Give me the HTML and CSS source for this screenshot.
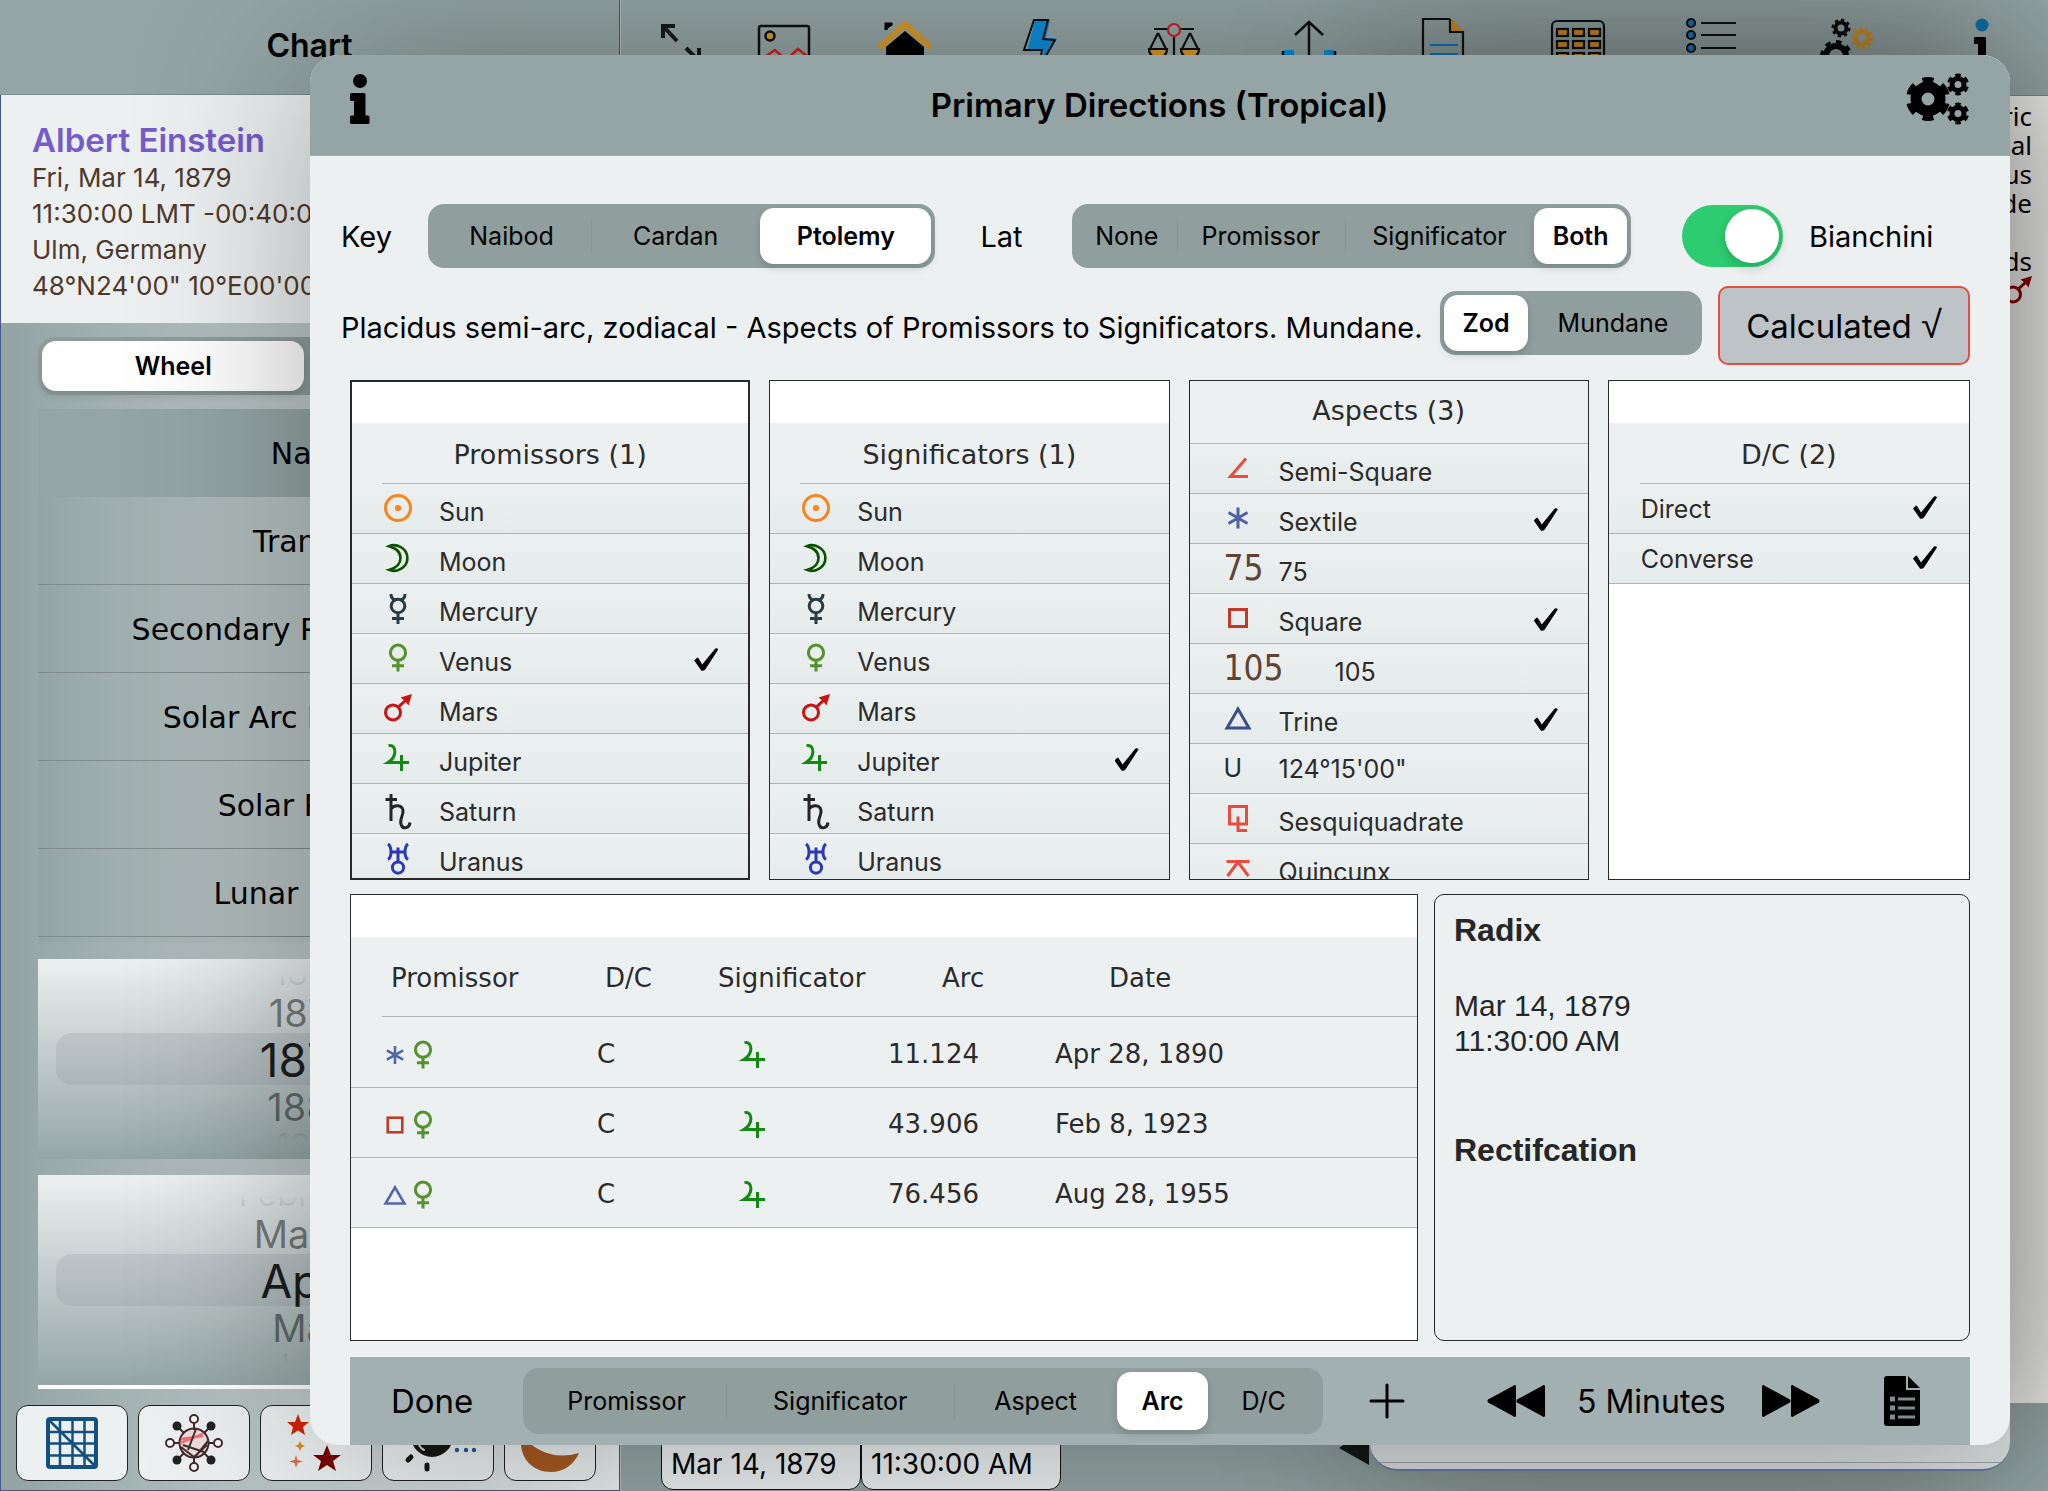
FILE: index.html
```html
<!DOCTYPE html>
<html lang="en">
<head>
    <meta charset="UTF-8">
    <meta name="viewport" content="width=device-width, initial-scale=1.0">
    <title>Primary Directions</title>
    <link rel="stylesheet" href="styles.css">
</head>
<body>
    <!-- Glyphs shared by the lists and the results table -->
    <svg class="symbols" aria-hidden="true">
        <symbol id="sun" viewBox="0 0 28 28"><circle cx="14" cy="14" r="12.5"/><circle cx="14" cy="14" r="1.6"/></symbol>
        <symbol id="moon" viewBox="0 0 28 28"><path d="M5 2.2C12-1 23.4 4 23.4 14S12 29 5 25.9C12 24 16.5 20 16.5 14S12 4 5 2.2Z" stroke-width="2.6"/></symbol>
        <symbol id="mercury" viewBox="0 0 28 28"><circle cx="14" cy="12" r="6.8"/><path d="M7 0C7 3.500 9 5.500 11.500 6M21 0C21 3.500 19 5.500 16.500 6M14 19V30M8 24.500H20"/></symbol>
        <symbol id="venus" viewBox="0 0 28 28"><circle cx="14" cy="8.7" r="7.6"/><path d="M14 16.500V27.500M8 21.700H20"/></symbol>
        <symbol id="mars" viewBox="0 0 28 28"><circle cx="9" cy="18.4" r="7.5"/><path d="M14.500 12.800L22 6"/><path d="M28 0L16.500 3.500L21 7L24.500 11.500Z" fill="currentColor" stroke="none"/></symbol>
        <symbol id="jupiter" viewBox="0 0 28 28"><path d="M4.500 1.600C9 .6 11.200 4 10.800 8.500C10.300 13.500 7.500 16.500 4 18.600H25M17.500 11V27"/></symbol>
        <symbol id="saturn" viewBox="0 0 28 28"><path d="M7 0V27M1.500 5.500H13M7 15C10 10.500 18 10.500 19 16.500C19.800 21.500 14.500 25.500 17.500 31.500C19.500 35.500 25.500 34 26 28.500"/></symbol>
        <symbol id="uranus" viewBox="0 0 28 28"><circle cx="14" cy="23.6" r="5.6"/><path d="M14 3.500V18M6 8H22M4 0C8 3 8 13 4 15.500M24 0C20 3 20 13 24 15.500"/></symbol>
        <symbol id="semisquare" viewBox="0 0 28 28"><path d="M22 4.500L6.500 22.400H24"/></symbol>
        <symbol id="sextile" viewBox="0 0 28 28"><path d="M14 3.500V24.500M4.500 8.500L23.500 19.500M23.500 8.500L4.500 19.500"/></symbol>
        <symbol id="square" viewBox="0 0 28 28"><rect x="5.500" y="5.500" width="17" height="17"/></symbol>
        <symbol id="trine" viewBox="0 0 28 28"><path d="M14 5L25 24H3Z"/></symbol>
        <symbol id="sesqui" viewBox="0 0 28 28"><path d="M5.500 2.500H22.500V20H5.500ZM14 12.500V26.500H23"/></symbol>
        <symbol id="quincunx" viewBox="0 0 28 28"><path d="M2.500 7.500H25.500M3.500 22L14 8L24.500 22"/></symbol>
    </svg>

    <div class="app">
        <aside class="sidebar">
            <header class="sidebar-header">Chart</header>
            <section class="person">
                <h2>Albert Einstein</h2>
                <p>Fri, Mar 14, 1879</p>
                <p>11:30:00 LMT -00:40:00</p>
                <p>Ulm, Germany</p>
                <p>48°N24'00" 10°E00'00"</p>
            </section>
            <div class="sidebar-body">
                <div class="segmented view-switch">
                    <label><input type="radio" name="view" checked><span>Wheel</span></label>
                    <label><input type="radio" name="view"><span>Table</span></label>
                </div>
                <ul class="methods">
                    <li class="active">Natal</li>
                    <li>Transits</li>
                    <li>Secondary Progressions</li>
                    <li>Solar Arc Directions</li>
                    <li>Solar Return</li>
                    <li>Lunar Return</li>
                </ul>
                <ul class="picker">
                    <li class="far above">1877</li>
                    <li class="near">1878</li>
                    <li class="current">1879</li>
                    <li class="near">1880</li>
                    <li class="far below">1881</li>
                </ul>
                <ul class="picker months">
                    <li class="far above">February</li>
                    <li class="near">March</li>
                    <li class="current">April</li>
                    <li class="near">May</li>
                    <li class="far below">June</li>
                </ul>
                <div class="tools">
                    <button type="button" aria-label="Grid">
                        <svg width="52" height="52" viewBox="0 0 52 52" fill="none" stroke="#14507f" stroke-width="2.500"><rect x="2" y="2" width="48" height="48" rx="2" stroke-width="4"/><path d="M14 2V50M26.500 2V50M38.500 2V50M2 15H50M2 26.500H50M2 38.500H50M3 3L49 49"/></svg>
                    </button>
                    <button type="button" aria-label="Planets">
                        <svg width="58" height="58" viewBox="0 0 58 58" fill="none" stroke="#42292b" stroke-width="2"><circle cx="29" cy="29" r="14.500" fill="#e9dede"/><path d="M15 29L38 20M16 25L38 22" stroke="#f07070" stroke-width="2.500"/><path d="M29 9V16M29 42V49M9 29H15M43 29H49M14 14L19 19M44 14L39 19M14 44L19 39M44 44L39 39M31 15L23 36M16 33L29 43L42 31M18 31L39 38M30 43L43 27"/><g fill="#fff"><circle cx="29" cy="5" r="4"/><circle cx="29" cy="53" r="4"/><circle cx="5" cy="29" r="4"/><circle cx="53" cy="29" r="4"/></g><g fill="#222" stroke="none"><circle cx="12" cy="12" r="4.500"/><circle cx="46" cy="12" r="4.500"/><circle cx="12" cy="46" r="4.500"/><circle cx="46" cy="46" r="4.500"/></g></svg>
                    </button>
                    <button type="button" aria-label="Stars">
                        <svg width="58" height="58" viewBox="0 0 58 58"><path fill="#d62400" d="M11 0L14 8H22L16 13L18 21L11 16.500L4 21L6 13L0 8H8Z"/><path fill="#e08a2a" d="M13 27L14.500 30.500L18 32L14.500 33.500L13 37L11.500 33.500L8 32L11.500 30.500Z"/><path fill="#e0704a" d="M9 41L10.500 46L16 47.500L10.500 49L9 54L7.500 49L2 47.500L7.500 46Z"/><path fill="#7c0000" d="M40 31L44 41H54L46 47L49 57L40 51L31 57L34 47L26 41H36Z"/></svg>
                    </button>
                    <button type="button" aria-label="Eclipse">
                        <svg width="72" height="58" viewBox="0 0 72 58" stroke="#151713" stroke-width="5" stroke-linecap="round"><path d="M6 46L9 43M25 51V55M2 24H7"/><circle cx="30" cy="22" r="18.500" fill="#151713"/><path d="M15 22C15 29 18 34 22 36" stroke="#d0d3d2" stroke-width="2" fill="none"/><g fill="#1d5d9b" stroke="none"><circle cx="55" cy="36" r="2.200"/><circle cx="64" cy="36" r="2.200"/><circle cx="72" cy="36" r="2.200"/></g></svg>
                    </button>
                    <button type="button" class="narrow" aria-label="Moon">
                        <svg width="58" height="58" viewBox="0 0 58 58"><path fill="#a85a22" d="M0 20C14 38 34 46 58 39C53 51 42 58 30 58C12 58 0 45 0 29Z"/></svg>
                    </button>
                </div>
            </div>
        </aside>

        <main class="main">
            <nav class="toolbar">
                <div class="toolbar-start">
                    <svg class="arrows" width="40" height="50" viewBox="0 0 40 50" fill="none" stroke="#151a19" stroke-width="4"><path d="M2 14V2H14M3 3L16 17M25 24L38 37M38 24V38H26"/></svg>
                    <svg width="54" height="50" viewBox="0 0 54 50" fill="none" stroke="#0d1111" stroke-width="2.500"><rect x="2" y="8" width="50" height="42" rx="2"/><circle cx="13" cy="18" r="4.500" fill="#d89a2a"/><path d="M3 42L18 32L29 42L41 31L51 39" stroke="#cf2027"/></svg>
                </div>
                <div class="toolbar-end">
                    <svg width="54" height="50" viewBox="0 0 54 50"><path d="M8 12V6H13V8" stroke="#000" stroke-width="3"/><path d="M8 29L27 13L46 29V50H8Z"/><path d="M3 28L27 6L51 28" fill="none" stroke="#d89a2a" stroke-width="6" stroke-linecap="round"/></svg>
                    <svg width="54" height="50" viewBox="0 0 54 50"><path d="M22 2H37L33 20H43L26 48L31 33H14Z" fill="#0d8fdb"/><path d="M21 2H35L30 21L42 22L26 50L29 32H11Z" fill="none" stroke="#0d1111" stroke-width="2"/></svg>
                    <svg width="54" height="50" viewBox="0 0 54 50" fill="none" stroke="#0d1111" stroke-width="2.200"><path d="M2 31H20C20 43 2 43 2 31ZM34 31H52C52 43 34 43 34 31Z" fill="#d89a2a"/><path d="M7 11H21M33 11H47M27 18V50M11 15L3 31M11 15L19 31M43 15L35 31M43 15L51 31"/><circle cx="27" cy="12" r="6" stroke="#cf2027"/></svg>
                    <svg width="54" height="50" viewBox="0 0 54 50" fill="none" stroke="#0d1111" stroke-width="2.500"><path d="M27 4V50M13 17L27 4L41 17"/><path d="M12 35H5V50M42 35H49V50" stroke="#0d8fdb" stroke-width="6"/><path d="M1 33V50M53 33V50"/></svg>
                    <svg width="54" height="50" viewBox="0 0 54 50" fill="none" stroke="#0d1111" stroke-width="2.200"><path d="M36 1L47 13H36Z" fill="#d08f24" stroke="none"/><path d="M34 1H7V50M34 1V14H47V50"/><path d="M14 27H42M14 36H42" stroke="#0d7fc4"/></svg>
                    <svg width="54" height="50" viewBox="0 0 54 50" fill="none" stroke="#0d1111" stroke-width="2.200"><rect x="1" y="3" width="52" height="50" rx="5"/><g fill="#d08f24"><rect x="6" y="11" width="11" height="7"/><rect x="22" y="11" width="11" height="7"/><rect x="38" y="11" width="11" height="7"/><rect x="6" y="23" width="11" height="7"/><rect x="22" y="23" width="11" height="7"/><rect x="38" y="23" width="11" height="7"/><rect x="6" y="35" width="11" height="7"/><rect x="22" y="35" width="11" height="7"/><rect x="38" y="35" width="11" height="7"/></g></svg>
                    <svg width="54" height="50" viewBox="0 0 54 50" fill="none" stroke="#0d1111" stroke-width="2.200"><path d="M16 5H51M16 17H51M16 30H51"/><g fill="#0d7fc4"><circle cx="6" cy="5" r="4"/><circle cx="6" cy="17" r="4"/><circle cx="6" cy="30" r="4"/></g></svg>
                    <svg width="54" height="50" viewBox="0 0 54 50" fill="none"><g stroke="#080b0a"><circle cx="21" cy="10" r="5.500" stroke-width="4"/><circle cx="21" cy="10" r="8" stroke-width="3" pathLength="16" stroke-dasharray="1"/><circle cx="16" cy="38" r="10" stroke-width="6"/><circle cx="16" cy="38" r="14" stroke-width="4" pathLength="16" stroke-dasharray="1"/></g><g stroke="#d08f24"><circle cx="42" cy="20" r="6.500" stroke-width="4"/><circle cx="42" cy="20" r="9.500" stroke-width="3" pathLength="20" stroke-dasharray="1"/></g></svg>
                    <svg width="54" height="50" viewBox="0 0 54 50"><circle cx="28" cy="7" r="6.500" fill="#0d72a8"/><path d="M20 19H32V50H24V26H20Z"/></svg>
                </div>
            </nav>
            <section class="chart">
                <p>Geocentric</p>
                <p>Tropical</p>
                <p>Placidus</p>
                <p>Mean Node</p>
                <p class="spaced">Bounds</p>
                <svg class="glyph red-dark" width="28" height="28"><use href="#mars"/></svg>
            </section>
            <footer class="time-bar">
                <input type="text" value="Mar 14, 1879" aria-label="Date">
                <input type="text" value="11:30:00 AM" aria-label="Time">
                <svg class="back" width="30" height="50" viewBox="0 0 30 50"><path d="M0 23L30 2V40Z" fill="#131a18"/></svg>
            </footer>
        </main>
    </div>

    <div class="sheet-under"></div>

    <div class="sheet" role="dialog" aria-labelledby="sheet-title">
        <header class="sheet-header">
            <button type="button" class="icon-button" aria-label="Info">
                <svg width="20" height="50" viewBox="0 0 20 50"><circle cx="10" cy="7" r="7"/><path d="M1.500 19H14Q15.500 19 15.500 20.500V41.500H18Q19.500 41.500 19.500 43V48.500Q19.500 50 18 50H1.500Q0 50 0 48.500V43Q0 41.500 1.500 41.500H4V27H1.500Q0 27 0 25.500V20.500Q0 19 1.500 19Z"/></svg>
            </button>
            <h1 id="sheet-title">Primary Directions (Tropical)</h1>
            <button type="button" class="icon-button settings" aria-label="Settings">
                <svg width="62" height="50" viewBox="0 0 62 50" fill="none" stroke="#000"><circle cx="21" cy="25" r="12" stroke-width="11"/><circle cx="21" cy="25" r="19" stroke-width="6" pathLength="120" stroke-dasharray="11 9" stroke-dashoffset="-4.500"/><circle cx="51" cy="10.500" r="6" stroke-width="5"/><circle cx="51" cy="10.500" r="9.500" stroke-width="3" pathLength="120" stroke-dasharray="11 9" stroke-dashoffset="-4.500"/><circle cx="51" cy="39.500" r="6" stroke-width="5"/><circle cx="51" cy="39.500" r="9.500" stroke-width="3" pathLength="120" stroke-dasharray="11 9" stroke-dashoffset="-4.500"/></svg>
            </button>
        </header>

        <div class="options">
            <span class="option-label key">Key</span>
            <div class="segmented key-switch">
                <label><input type="radio" name="key"><span>Naibod</span></label>
                <label class="divided"><input type="radio" name="key"><span>Cardan</span></label>
                <label><input type="radio" name="key" checked><span>Ptolemy</span></label>
            </div>
            <span class="option-label lat">Lat</span>
            <div class="segmented lat-switch">
                <label><input type="radio" name="lat"><span>None</span></label>
                <label class="divided"><input type="radio" name="lat"><span>Promissor</span></label>
                <label class="divided"><input type="radio" name="lat"><span>Significator</span></label>
                <label><input type="radio" name="lat" checked><span>Both</span></label>
            </div>
            <input type="checkbox" class="toggle" id="bianchini" checked>
            <label class="option-label bianchini" for="bianchini">Bianchini</label>
        </div>

        <div class="summary">
            <p>Placidus semi-arc, zodiacal - Aspects of Promissors to Significators. Mundane.</p>
            <div class="segmented zod-switch">
                <label><input type="radio" name="plane" checked><span>Zod</span></label>
                <label><input type="radio" name="plane"><span>Mundane</span></label>
            </div>
            <button type="button" class="calculate">Calculated <span class="root">√</span></button>
        </div>

        <div class="lists">
            <section class="list focused">
                <h3>Promissors (1)</h3>
                <label class="row"><svg class="glyph orange"><use href="#sun"/></svg><span>Sun</span><input type="checkbox"></label>
                <label class="row"><svg class="glyph green-dark"><use href="#moon"/></svg><span>Moon</span><input type="checkbox"></label>
                <label class="row"><svg class="glyph slate"><use href="#mercury"/></svg><span>Mercury</span><input type="checkbox"></label>
                <label class="row"><svg class="glyph olive"><use href="#venus"/></svg><span>Venus</span><input type="checkbox" checked></label>
                <label class="row"><svg class="glyph red"><use href="#mars"/></svg><span>Mars</span><input type="checkbox"></label>
                <label class="row"><svg class="glyph green"><use href="#jupiter"/></svg><span>Jupiter</span><input type="checkbox"></label>
                <label class="row"><svg class="glyph black"><use href="#saturn"/></svg><span>Saturn</span><input type="checkbox"></label>
                <label class="row"><svg class="glyph blue"><use href="#uranus"/></svg><span>Uranus</span><input type="checkbox"></label>
            </section>

            <section class="list">
                <h3>Significators (1)</h3>
                <label class="row"><svg class="glyph orange"><use href="#sun"/></svg><span>Sun</span><input type="checkbox"></label>
                <label class="row"><svg class="glyph green-dark"><use href="#moon"/></svg><span>Moon</span><input type="checkbox"></label>
                <label class="row"><svg class="glyph slate"><use href="#mercury"/></svg><span>Mercury</span><input type="checkbox"></label>
                <label class="row"><svg class="glyph olive"><use href="#venus"/></svg><span>Venus</span><input type="checkbox"></label>
                <label class="row"><svg class="glyph red"><use href="#mars"/></svg><span>Mars</span><input type="checkbox"></label>
                <label class="row"><svg class="glyph green"><use href="#jupiter"/></svg><span>Jupiter</span><input type="checkbox" checked></label>
                <label class="row"><svg class="glyph black"><use href="#saturn"/></svg><span>Saturn</span><input type="checkbox"></label>
                <label class="row"><svg class="glyph blue"><use href="#uranus"/></svg><span>Uranus</span><input type="checkbox"></label>
            </section>

            <section class="list aspects">
                <h3>Aspects (3)</h3>
                <label class="row"><svg class="glyph coral"><use href="#semisquare"/></svg><span>Semi-Square</span><input type="checkbox"></label>
                <label class="row"><svg class="glyph indigo"><use href="#sextile"/></svg><span>Sextile</span><input type="checkbox" checked></label>
                <label class="row"><b class="degree">75</b><span>75</span><input type="checkbox"></label>
                <label class="row"><svg class="glyph brick"><use href="#square"/></svg><span>Square</span><input type="checkbox" checked></label>
                <label class="row"><b class="degree wide">105</b><span>105</span><input type="checkbox"></label>
                <label class="row"><svg class="glyph navy"><use href="#trine"/></svg><span>Trine</span><input type="checkbox" checked></label>
                <label class="row plain"><b class="letter">U</b><span>124°15'00"</span><input type="checkbox"></label>
                <label class="row"><svg class="glyph coral"><use href="#sesqui"/></svg><span>Sesquiquadrate</span><input type="checkbox"></label>
                <label class="row"><svg class="glyph coral"><use href="#quincunx"/></svg><span>Quincunx</span><input type="checkbox"></label>
            </section>

            <section class="list directions">
                <h3>D/C (2)</h3>
                <label class="row plain"><span>Direct</span><input type="checkbox" checked></label>
                <label class="row plain"><span>Converse</span><input type="checkbox" checked></label>
            </section>
        </div>

        <div class="results">
            <div class="table-box">
                <table>
                    <colgroup><col class="c-promissor"><col class="c-dc"><col class="c-significator"><col class="c-arc"><col></colgroup>
                    <thead>
                        <tr><th>Promissor</th><th>D/C</th><th>Significator</th><th>Arc</th><th>Date</th></tr>
                    </thead>
                    <tbody>
                        <tr>
                            <td><svg class="glyph small periwinkle"><use href="#sextile"/></svg><svg class="glyph olive"><use href="#venus"/></svg></td>
                            <td>C</td>
                            <td><svg class="glyph green"><use href="#jupiter"/></svg></td>
                            <td>11.124</td>
                            <td>Apr 28, 1890</td>
                        </tr>
                        <tr>
                            <td><svg class="glyph small brick"><use href="#square"/></svg><svg class="glyph olive"><use href="#venus"/></svg></td>
                            <td>C</td>
                            <td><svg class="glyph green"><use href="#jupiter"/></svg></td>
                            <td>43.906</td>
                            <td>Feb 8, 1923</td>
                        </tr>
                        <tr>
                            <td><svg class="glyph small periwinkle"><use href="#trine"/></svg><svg class="glyph olive"><use href="#venus"/></svg></td>
                            <td>C</td>
                            <td><svg class="glyph green"><use href="#jupiter"/></svg></td>
                            <td>76.456</td>
                            <td>Aug 28, 1955</td>
                        </tr>
                    </tbody>
                </table>
            </div>
            <section class="radix">
                <h3>Radix</h3>
                <p>Mar 14, 1879<br>11:30:00 AM</p>
                <h3>Rectifcation</h3>
            </section>
        </div>

        <footer class="sheet-footer">
            <button type="button" class="done">Done</button>
            <div class="segmented sort-switch">
                <label><input type="radio" name="sort"><span>Promissor</span></label>
                <label class="divided"><input type="radio" name="sort"><span>Significator</span></label>
                <label class="divided"><input type="radio" name="sort"><span>Aspect</span></label>
                <label><input type="radio" name="sort" checked><span>Arc</span></label>
                <label><input type="radio" name="sort"><span>D/C</span></label>
            </div>
            <button type="button" class="icon-button plus" aria-label="Add">
                <svg width="36" height="36" viewBox="0 0 36 36" stroke="#000" stroke-width="3" stroke-linecap="round"><path d="M18 2V34M2 18H34"/></svg>
            </button>
            <button type="button" class="icon-button rewind" aria-label="Back">
                <svg width="58" height="34" viewBox="0 0 58 34"><path d="M29 2V32Q28 34 26 32L1 18.500Q0 17 1 15.500L26 2Q28 0 29 2ZM58 2V32Q57 34 55 32L30 18.500Q29 17 30 15.500L55 2Q57 0 58 2Z"/></svg>
            </button>
            <span class="step">5 Minutes</span>
            <button type="button" class="icon-button forward" aria-label="Forward">
                <svg width="58" height="34" viewBox="0 0 58 34"><path d="M0 2V32Q1 34 3 32L28 18.500Q29 17 28 15.500L3 2Q1 0 0 2ZM29 2V32Q30 34 32 32L57 18.500Q58 17 57 15.500L32 2Q30 0 29 2Z"/></svg>
            </button>
            <button type="button" class="icon-button" aria-label="Report">
                <svg width="36" height="50" viewBox="0 0 36 50"><path d="M3 0H22V14H36V47Q36 50 33 50H3Q0 50 0 47V3Q0 0 3 0ZM24 0L36 12H24Z"/><path d="M14 23H31M14 32H31M14 41H31" stroke="#7f8b8b" stroke-width="3"/><path d="M6 23H11M6 32H11M6 41H11" stroke="#7f8b8b" stroke-width="5"/></svg>
            </button>
        </footer>
    </div>
</body>
</html>
```
FILE: styles.css
```css
* {
    box-sizing: border-box;
}
body {
    margin: 0;
    height: 100vh;
    overflow: hidden;
    position: relative;
    background-color: #95a5a5;
    color: #000;
    font-family: Inter, "Liberation Sans", sans-serif;
    font-size: 26px;
}
h1, h2, h3, p, ul {
    margin: 0;
    padding: 0;
}
ul {
    list-style: none;
}
button, input {
    font: inherit;
    color: inherit;
}
button {
    padding: 0;
    border: 0;
    background: none;
    cursor: pointer;
}
svg {
    display: block;
    overflow: visible;
    flex: none;
}
.symbols {
    position: absolute;
    width: 0;
    height: 0;
}
.app {
    display: grid;
    grid-template-columns: 620px 1fr;
    height: 100%;
}

/* Sidebar */
.sidebar {
    display: flex;
    flex-direction: column;
    min-height: 0;
    border-right: 1px solid #46568f;
    border-bottom: 1px solid #46568f;
}
.sidebar-header {
    height: 96px;
    padding-top: 26px;
    background-color: #95a5a5;
    border-bottom: 1px solid #7d8a89;
    text-align: center;
    font-size: 32px;
    font-weight: 600;
    line-height: 40px;
}
.person {
    height: 228px;
    padding: 25px 31px;
    background-color: #ecf0f1;
    border-left: 1px solid #46568f;
    color: #4f392b;
    line-height: 36px;
    white-space: nowrap;
}
.person h2 {
    color: #765bcb;
    font-size: 33px;
    font-weight: 600;
    line-height: 40px;
}
.sidebar-body {
    flex: 1;
    display: flex;
    flex-direction: column;
    padding: 14px 14px 9px 15px;
    background: linear-gradient(to right, #93a3a3, #ecf0f1);
    border-left: 1px solid #46568f;
}
.view-switch {
    height: 58px;
    margin: 0 22px;
    grid-template-columns: 262fr 274fr;
}
.methods {
    margin: 14px 22px 16px;
    padding-bottom: 6px;
    background: linear-gradient(to right, #95a5a5, #dfe4e5);
    font-family: "DejaVu Sans", sans-serif;
    font-size: 30px;
    text-align: center;
}
.methods li {
    height: 88px;
    border-bottom: 1px solid #828c8c;
    line-height: 90px;
}
.methods .active {
    background-color: #95a5a5;
    border-bottom-color: transparent;
}
.picker {
    height: 200px;
    margin: 0 22px 16px;
    display: flex;
    flex-direction: column;
    justify-content: center;
    background: linear-gradient(to bottom, #ecf0f1, #95a5a5);
    text-align: center;
}
.months {
    height: 214px;
    border-bottom: 4px solid #fff;
}
.picker .current {
    height: 52px;
    margin: 0 18px;
    border-radius: 16px;
    background-color: rgba(140, 145, 155, 0.22);
    color: #1c1f1f;
    font-size: 46px;
    line-height: 54px;
}
.picker .near {
    height: 42px;
    color: rgba(0, 0, 0, 0.45);
    font-size: 38px;
    line-height: 44px;
}
.picker .far {
    height: 24px;
    overflow: hidden;
    color: rgba(0, 0, 0, 0.15);
    font-size: 34px;
}
.picker .above {
    line-height: 12px;
    -webkit-mask-image: linear-gradient(transparent 30%, #000);
    mask-image: linear-gradient(transparent 30%, #000);
}
.picker .below {
    line-height: 38px;
    -webkit-mask-image: linear-gradient(#000, transparent 60%);
    mask-image: linear-gradient(#000, transparent 60%);
}
.tools {
    display: flex;
    gap: 10px;
}
.tools button {
    width: 112px;
    height: 76px;
    display: flex;
    align-items: center;
    justify-content: center;
    border: 1px solid #1e2222;
    border-radius: 12px;
    background-color: #ecf0f1;
}
.tools .narrow {
    width: 92px;
}

/* Main area */
.main {
    display: flex;
    flex-direction: column;
    min-width: 0;
    border-left: 1px solid #b9c1c0;
}
.toolbar {
    height: 96px;
    padding: 18px 40px 0;
    display: flex;
    gap: 67px;
    border-bottom: 1px solid #7d8a89;
}
.toolbar-start {
    display: flex;
    gap: 56px;
}
.arrows {
    margin-top: 6px;
}
.toolbar-end {
    flex: 1;
    display: flex;
    justify-content: space-between;
}
.chart {
    flex: 1;
    padding: 6px 16px;
    background-color: #eeeeec;
    font-family: "Noto Sans", sans-serif;
    line-height: 29px;
    text-align: right;
}
.chart .spaced {
    margin-top: 29px;
}
.chart .glyph {
    margin-left: auto;
}
.time-bar {
    height: 88px;
    padding: 22px 0 1px 40px;
    display: flex;
}
.time-bar input {
    width: 200px;
    padding: 12px 0 0 9px;
    border: 1px solid #111;
    border-radius: 12px;
    background-color: #ecf0f1;
    font-size: 28px;
}
.time-bar .back {
    margin-left: 278px;
}

/* Segmented controls */
.segmented {
    display: grid;
    padding: 4px;
    border-radius: 16px;
    background-color: #909e9e;
    font-size: 25px;
}
.segmented label {
    position: relative;
    display: flex;
    cursor: pointer;
}
.segmented input {
    position: absolute;
    opacity: 0;
}
.segmented span {
    flex: 1;
    display: flex;
    align-items: center;
    justify-content: center;
    border-radius: 14px;
}
.segmented input:checked + span {
    background-color: #fff;
    box-shadow: 0 4px 8px rgba(0, 0, 0, 0.15);
    font-weight: 600;
}
.segmented .divided {
    background: linear-gradient(#879595, #879595) no-repeat left center / 1px 36px;
}

/* Popovers */
.sheet-under {
    position: absolute;
    top: 55px;
    right: 38px;
    bottom: 20px;
    width: 640px;
    border-bottom: 2px solid #66769c;
    border-radius: 28px;
    background: linear-gradient(#9aa4a4, #9aa4a4) no-repeat left bottom 6px / 100% 1px #d7dbdc;
    box-shadow: 0 0 160px rgba(0, 0, 0, 0.3);
}
.sheet {
    position: absolute;
    top: 55px;
    right: 38px;
    bottom: 46px;
    left: 310px;
    display: flex;
    flex-direction: column;
    overflow: hidden;
    border-radius: 28px;
    background-color: #ecf0f1;
    box-shadow: 0 0 180px rgba(0, 0, 0, 0.32);
}
.sheet-header {
    height: 101px;
    padding: 0 41px 12px 40px;
    display: grid;
    grid-template-columns: 1fr auto 1fr;
    align-items: center;
    background-color: #95a5a5;
    border-bottom: 1px solid #a4afb0;
}
.sheet-header h1 {
    padding-top: 12px;
    font-size: 33px;
    font-weight: 600;
}
.sheet-header .icon-button {
    justify-self: start;
}
.sheet-header .settings {
    justify-self: end;
}
.options {
    margin: 48px 40px 18px 31px;
    display: flex;
    align-items: center;
}
.option-label {
    font-size: 29px;
}
.options .segmented {
    height: 64px;
}
.key {
    width: 87px;
}
.key-switch {
    flex: 507 1 0;
    grid-template-columns: 159fr 169fr 171fr;
}
.lat {
    width: 137px;
    padding-left: 45px;
}
.lat-switch {
    flex: 559 1 0;
    grid-template-columns: 101fr 168fr 190fr 93fr;
}
.toggle {
    appearance: none;
    width: 101px;
    height: 62px;
    margin: 0 26px 0 51px;
    padding: 4px;
    border-radius: 31px;
    background-color: #2ecc71;
}
.toggle::before {
    content: "";
    display: block;
    width: 54px;
    height: 54px;
    margin-left: auto;
    border-radius: 50%;
    background-color: #fff;
    box-shadow: 0 4px 12px rgba(0, 0, 0, 0.2);
}
.toggle:not(:checked)::before {
    margin-left: 0;
}
.bianchini {
    width: 161px;
}
.summary {
    margin: 0 40px 15px 31px;
    display: flex;
    align-items: center;
}
.summary p {
    flex: 1;
    padding-top: 4px;
    font-size: 29px;
    white-space: nowrap;
}
.zod-switch {
    width: 262px;
    height: 64px;
    margin: 0 16px 6px 0;
    grid-template-columns: 84fr 170fr;
}
.calculate {
    width: 252px;
    height: 79px;
    border: 2px solid #e74c3c;
    border-radius: 10px;
    background-color: #bdc3c7;
    font-size: 33px;
    line-height: 40px;
}
.root {
    font-family: "Liberation Sans", sans-serif;
    font-size: 38px;
}

/* Lists */
.lists {
    height: 500px;
    margin: 0 40px 14px;
    display: grid;
    grid-template-columns: 400fr 400fr 400fr 362fr;
    gap: 19px;
}
.list {
    padding-top: 42px;
    overflow: hidden;
    border: 1px solid #2a2a2a;
    background-color: #fff;
}
.list.focused {
    border-width: 2px;
    padding-top: 41px;
}
.list h3 {
    height: 61px;
    background: linear-gradient(#b0b6b7, #b0b6b7) no-repeat 30px 100% / 100% 1px #ecf0f1;
    color: #2b2b2b;
    font-family: "DejaVu Sans", sans-serif;
    font-size: 27px;
    font-weight: 400;
    line-height: 63px;
    text-align: center;
}
.row {
    height: 50px;
    padding: 0 30px 2px 32px;
    display: flex;
    align-items: center;
    border-bottom: 1px solid #b0b6b7;
    background: linear-gradient(#ecf0f1, #e5eaea);
    color: #2b2b2b;
    font-size: 25px;
}
.row span {
    flex: 1;
    padding-top: 9px;
}
.row .glyph {
    margin-right: 27px;
}
.row input {
    appearance: none;
    width: 24px;
    height: 24px;
    margin: 4px 0 0;
}
.row input:checked {
    background-color: #000;
    clip-path: path("M0 13L3 10Q4 10 5 12L8 17L21 1Q23 0 24 2L11 22Q9 24 7 23Z");
}
.plain span, .plain input {
    margin-top: 0;
    padding-top: 2px;
}
.aspects {
    padding-top: 0;
}
.aspects .row {
    padding-left: 34px;
}
.aspects h3 {
    height: 63px;
    background-position: 0 100%;
    line-height: 60px;
}
.degree, .letter {
    width: 55px;
    font-weight: 400;
}
.degree {
    color: #5f4433;
    font-family: "DejaVu Sans Condensed", "DejaVu Sans", sans-serif;
    font-size: 35px;
}
.degree.wide {
    width: 111px;
}
.directions h3 {
    background-position: 31px 100%;
}
.directions .row {
    padding-right: 32px;
}

/* Glyph colours */
.glyph {
    width: 28px;
    height: 28px;
    fill: none;
    stroke: currentColor;
    stroke-width: 3;
    overflow: visible;
}
.glyph.small {
    width: 24px;
    height: 24px;
}
.symbols symbol {
    overflow: visible;
}
.orange { color: #f6861f; }
.green-dark { color: #0a5200; }
.slate { color: #2c3a42; }
.olive { color: #55912e; }
.red { color: #c81414; }
.red-dark { color: #8c0000; }
.green { color: #108a10; }
.black { color: #262626; }
.blue { color: #2b39b5; }
.coral { color: #e74c3c; }
.indigo { color: #4b60a5; }
.periwinkle { color: #4f68a8; }
.brick { color: #c0392b; }
.navy { color: #3a4f8a; }

/* Results */
.results {
    flex: 1;
    min-height: 0;
    margin: 0 40px 16px;
    display: grid;
    grid-template-columns: 1068fr 536fr;
    gap: 16px;
}
.table-box {
    padding-top: 42px;
    border: 1px solid #2a2a2a;
    background-color: #fff;
}
table {
    width: 100%;
    border-collapse: collapse;
    table-layout: fixed;
    background-color: #ecf0f1;
    color: #2b2b2b;
    font-family: "DejaVu Sans", sans-serif;
}
.c-promissor { width: 246px; }
.c-dc { width: 121px; }
.c-significator { width: 170px; }
.c-arc { width: 167px; }
th, td {
    height: 70px;
    padding: 4px 0 0;
    font-weight: 400;
    text-align: left;
}
th {
    height: 80px;
    padding-top: 2px;
}
thead tr {
    background: linear-gradient(#b0b6b7, #b0b6b7) no-repeat 31px 100% / 100% 1px;
}
tbody tr {
    border-bottom: 1px solid #b0b6b7;
}
td:first-child {
    padding-left: 32px;
}
td .glyph {
    display: inline-block;
    vertical-align: middle;
}
td .small {
    margin-right: 2px;
}
td:nth-child(3) {
    padding-left: 22px;
}
th:nth-child(1) {
    padding-left: 40px;
}
th:nth-child(2) {
    padding-left: 8px;
}
th:nth-child(4), th:nth-child(5) {
    padding-left: 54px;
}
.radix {
    padding: 15px 19px;
    border: 1px solid #2a2a2a;
    border-radius: 10px;
    color: #262626;
    font-family: "Liberation Sans", sans-serif;
    font-size: 30px;
    line-height: 35px;
}
.radix h3 {
    font-size: 32px;
    line-height: 40px;
}
.radix p {
    margin: 38px 0 72px;
}

/* Footer */
.sheet-footer {
    height: 88px;
    margin: 0 40px;
    padding: 0 50px 0 41px;
    display: flex;
    align-items: center;
    background-color: #a2b0b1;
}
.done {
    width: 132px;
    text-align: left;
    font-size: 33px;
}
.sort-switch {
    flex: 1;
    height: 66px;
    grid-template-columns: 200fr 229fr 163fr 92fr 111fr;
}
.plus {
    margin: 0 82px 0 46px;
}
.step {
    width: 148px;
    margin: 0 37px 0 32px;
    font-size: 32px;
    white-space: nowrap;
}
.forward {
    margin-right: 64px;
}
```
